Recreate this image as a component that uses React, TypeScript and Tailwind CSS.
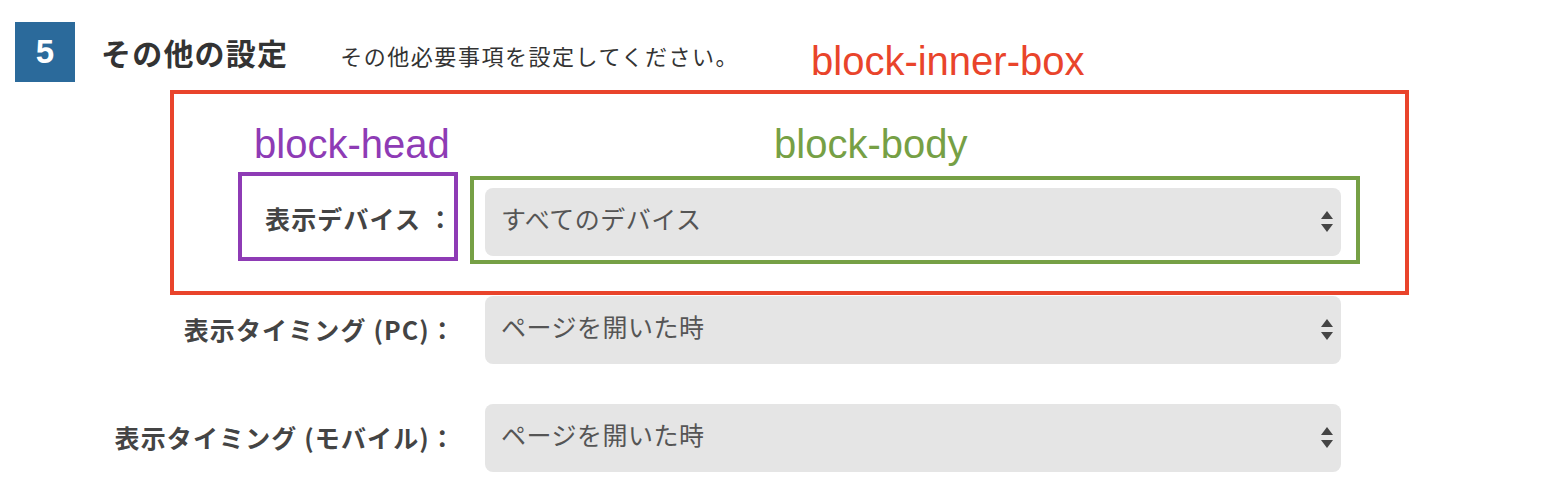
const jp = "font-['Noto_Sans_CJK_JP','Noto_Sans',sans-serif]";

function SortArrows() {
  return (
    <svg width="12" height="22" viewBox="0 0 12 22" className="shrink-0">
      <polygon points="6,0 12,8 0,8" fill="#444" />
      <polygon points="0,13 12,13 6,21" fill="#444" />
    </svg>
  );
}

function FakeSelect({ value }: { value: string }) {
  return (
    <div className="flex h-[68px] w-[856px] items-center justify-between rounded-[8px] bg-[#e5e5e5] pl-[16px] pr-[8px]">
      <span className="pb-[8px] text-[25px] leading-none tracking-[0.02em] text-[#555]">{value}</span>
      <SortArrows />
    </div>
  );
}

function FormRow({ label, value, className }: { label: string; value: string; className: string }) {
  return (
    <div className={"flex items-center " + className}>
      <div className="w-[456px] whitespace-nowrap text-right text-[25px] font-bold tracking-[0.045em] text-[#444]">
        {label}
      </div>
      <div className="ml-[29px]">
        <FakeSelect value={value} />
      </div>
    </div>
  );
}

export default function App() {
  return (
    <div className={"h-[485px] w-[1556px] overflow-hidden bg-white " + jp}>
      {/* section header */}
      <header className="flex h-[82px] items-center pl-[15px] pt-[22px]">
        <div className="flex h-[60px] w-[60px] items-center justify-center bg-[#2b6a9b] font-['Liberation_Sans',sans-serif] text-[33px] font-bold text-white">
          5
        </div>
        <h2 className="ml-[26px] text-[30px] font-bold tracking-[0.04em] text-[#333]">その他の設定</h2>
        <p className="ml-[52px] mt-[6px] text-[22px] tracking-[0.07em] text-[#333]">
          その他必要事項を設定してください。
        </p>
      </header>

      {/* block-inner-box */}
      <div className="relative ml-[170px] mt-[8px] w-[1239px] border-4 border-[#e9442b] pb-[27px] pl-[64px]">
        <span className="absolute left-[637px] top-[-53px] font-['Liberation_Sans',sans-serif] text-[40px] leading-none text-[#e9442b]">
          block-inner-box
        </span>

        <div className="mb-[8px] mt-[30px] flex h-[40px] font-['Liberation_Sans',sans-serif] text-[40px] leading-none">
          <span className="ml-[16px] w-[290px] text-[#8e3bb5]">block-head</span>
          <span className="ml-[230px] text-[#76a045]">block-body</span>
        </div>

        <div className="flex items-start gap-[12px]">
          <div className="flex h-[89px] w-[220px] items-center justify-end border-4 border-[#8e3bb5] pt-[4px]">
            <span className="whitespace-nowrap text-[25px] font-bold tracking-[0.045em] text-[#444]">表示デバイス ：</span>
          </div>
          <div className="mt-[4px] w-[890px] border-4 border-[#76a045] pb-[4px] pl-[11px] pr-[15px] pt-[8px]">
            <FakeSelect value="すべてのデバイス" />
          </div>
        </div>
      </div>

      <FormRow label="表示タイミング (PC)：" value="ページを開いた時" className="mt-[1px]" />
      <FormRow label="表示タイミング (モバイル)：" value="ページを開いた時" className="mt-[40px]" />
    </div>
  );
}
